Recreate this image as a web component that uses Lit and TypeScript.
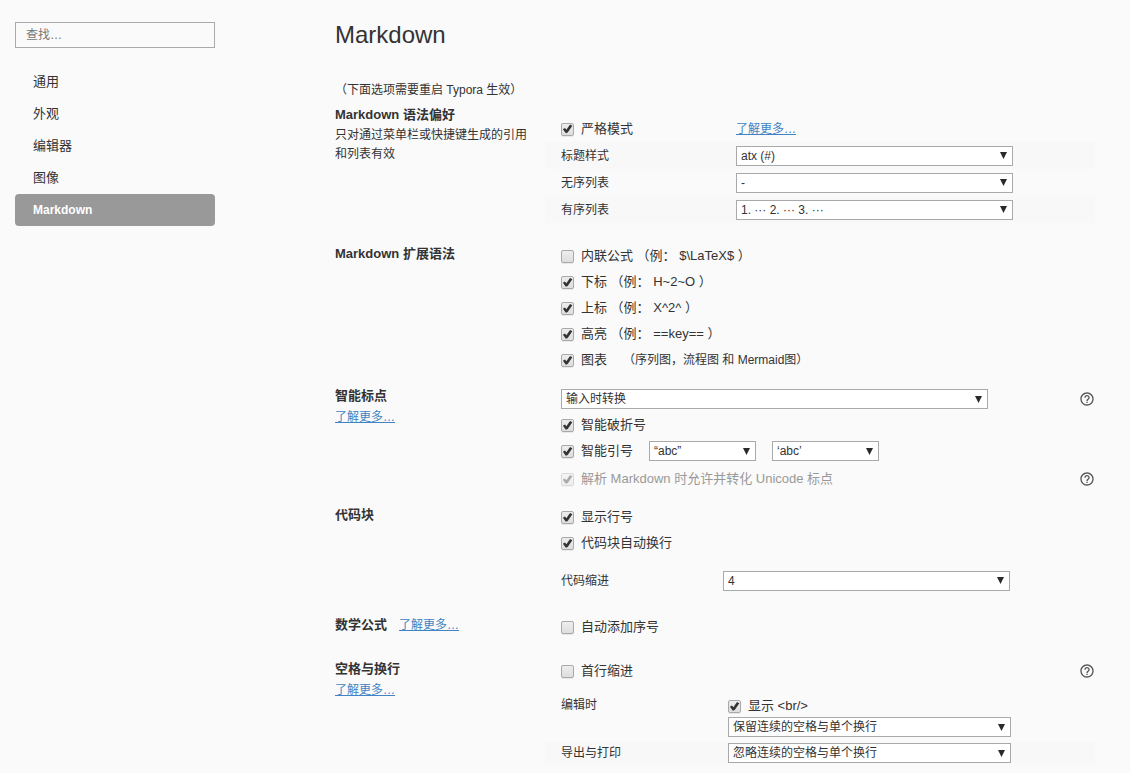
import { LitElement, html, css, nothing } from "lit";
import { customElement, property } from "lit/decorators.js";

const base = css`
  :host {
    display: block;
    box-sizing: border-box;
    font-family: "Liberation Sans", "Noto Sans CJK SC", sans-serif;
    color: #333;
  }
  *,
  *::before {
    box-sizing: border-box;
  }
`;

@customElement("check-item")
class CheckItem extends LitElement {
  @property() label = "";
  @property() note = "";
  @property({ type: Boolean }) checked = false;
  @property({ type: Boolean }) disabled = false;

  static styles = [
    base,
    css`
      .item {
        display: flex;
        align-items: center;
        height: 26px;
        font-size: 13px;
        line-height: 20px;
        white-space: nowrap;
      }
      .disabled {
        color: #999;
      }
      .box {
        appearance: none;
        flex: none;
        width: 13px;
        height: 13px;
        margin: 1px 7px 0 0;
        border: 1px solid #a9a9a9;
        border-radius: 2px;
        background: linear-gradient(#ededed, #dedede);
        box-shadow: 0 1px 0 #e8e8e8;
      }
      .box:checked::before {
        content: "";
        display: block;
        width: 11px;
        height: 11px;
        background: #333;
        clip-path: polygon(8% 53%, 27% 42%, 40% 56%, 73% 10%, 94% 20%, 52% 82%, 35% 88%);
      }
      .box:disabled {
        opacity: 0.4;
      }
      .note {
        margin-left: 16px;
        font-size: 12px;
      }
    `,
  ];

  render() {
    return html`<label class="item ${this.disabled ? "disabled" : ""}">
      <input class="box" type="checkbox" ?checked=${this.checked} ?disabled=${this.disabled} />
      <span>${this.label}</span>
      ${this.note ? html`<span class="note">${this.note}</span>` : nothing}
    </label>`;
  }
}

@customElement("select-box")
class SelectBox extends LitElement {
  @property() name = "";
  @property() value = "";

  static styles = [
    base,
    css`
      .wrap {
        display: grid;
        align-items: center;
      }
      .select {
        grid-area: 1 / 1;
        appearance: none;
        width: 100%;
        height: 20px;
        margin: 0;
        padding: 0 20px 0 4px;
        border: 1px solid #a9a9a9;
        border-radius: 0;
        background: #fff;
        color: #333;
        font: inherit;
        font-size: 12px;
        line-height: 18px;
      }
      .arrow {
        grid-area: 1 / 1;
        justify-self: end;
        width: 7px;
        height: 7px;
        margin-right: 6px;
        fill: #2a2a2a;
        pointer-events: none;
      }
    `,
  ];

  render() {
    return html`<div class="wrap">
      <select class="select" aria-label=${this.name}>
        <option>${this.value}</option>
      </select>
      <svg class="arrow" viewBox="0 0 7 7" aria-hidden="true"><path d="M0 0H7L3.5 7Z" /></svg>
    </div>`;
  }
}

@customElement("help-button")
class HelpButton extends LitElement {
  static styles = [
    base,
    css`
      .button {
        display: block;
        padding: 0;
        border: 0;
        background: none;
      }
      .icon {
        display: block;
        width: 16px;
        height: 16px;
        fill: #555;
      }
    `,
  ];

  render() {
    return html`<button class="button" type="button" aria-label="帮助">
      <svg class="icon" viewBox="0 0 24 24" aria-hidden="true">
        <path
          d="M11 18h2v-2h-2v2zm1-16C6.48 2 2 6.48 2 12s4.48 10 10 10 10-4.48 10-10S17.52 2 12 2zm0 18c-4.41 0-8-3.59-8-8s3.59-8 8-8 8 3.59 8 8-3.59 8-8 8zm0-14c-2.21 0-4 1.79-4 4h2c0-1.1.9-2 2-2s2 .9 2 2c0 2-3 1.75-3 5h2c0-2.25 3-2.5 3-5 0-2.21-1.79-4-4-4z"
        />
      </svg>
    </button>`;
  }
}

@customElement("app-root")
class AppRoot extends LitElement {
  static styles = [
    base,
    css`
      :host {
        min-height: 100vh;
        background: #fafafa;
      }
      .page {
        display: grid;
        grid-template-columns: 200px minmax(0, 1fr);
        gap: 120px;
        padding: 22px 35px 0 15px;
      }
      .search {
        display: block;
        width: 100%;
        height: 26px;
        padding: 0 10px;
        border: 1px solid #a9a9a9;
        background: #fafafa;
        color: #333;
        font: inherit;
        font-size: 12px;
      }
      .search::placeholder {
        color: #777;
      }
      .nav {
        display: grid;
        margin-top: 18px;
      }
      .nav-item {
        height: 32px;
        padding: 0 18px;
        border: 0;
        border-radius: 4px;
        background: none;
        color: #333;
        font: inherit;
        font-size: 13px;
        line-height: 30px;
        text-align: left;
      }
      .active {
        background: #999;
        color: #fff;
        font-size: 12px;
        font-weight: bold;
      }
      .title {
        margin: 0;
        font-size: 24px;
        font-weight: normal;
        line-height: 26px;
      }
      .hint {
        margin: 32px 0 4px;
        font-size: 12px;
        line-height: 20px;
      }
      .section {
        display: grid;
        grid-template-columns: 210px minmax(0, 1fr);
        margin-bottom: 12px;
      }
      .heading {
        margin: 0;
        font-size: 13px;
        line-height: 22px;
      }
      .inline {
        display: flex;
        gap: 12px;
      }
      .desc {
        margin: 0 16px 0 0;
        font-size: 12px;
        line-height: 19px;
      }
      .link {
        color: #4183c4;
        font-size: 12px;
        line-height: 20px;
      }
      .inline .link {
        line-height: 22px;
      }
      .body {
        padding: 0 16px;
      }
      .lowered {
        padding-top: 11px;
      }
      .spaced {
        padding-bottom: 6px;
      }
      .table {
        margin: 0 -16px;
        padding-bottom: 8px;
      }
      .row {
        display: grid;
        grid-template-columns: 175px 277px;
        align-items: center;
        min-height: 27px;
        padding: 0 16px;
        font-size: 12px;
        line-height: 20px;
      }
      .striped {
        background: #f8f8f8;
      }
      .indent {
        grid-template-columns: 162px 287px;
      }
      .breaks {
        grid-template-columns: 167px 283px;
        min-height: 22px;
      }
      .top {
        align-items: start;
      }
      .gap {
        margin-top: 11px;
      }
      .with-help {
        display: flex;
        align-items: center;
        justify-content: space-between;
        margin-right: -16px;
      }
      .mode {
        width: 427px;
      }
      .convert {
        padding: 4px 0 3px;
      }
      .quotes {
        display: flex;
        align-items: center;
        gap: 16px;
        margin-bottom: 2px;
      }
      .quote {
        width: 107px;
      }
      .editing {
        margin-bottom: 5px;
      }
      .tight {
        margin: -2px 0;
      }
    `,
  ];

  private nav = ["通用", "外观", "编辑器", "图像", "Markdown"];

  private more() {
    return html`<a class="link" href="#more">了解更多…</a>`;
  }

  render() {
    return html`<div class="page">
      <aside>
        <input class="search" type="search" placeholder="查找…" aria-label="查找" />
        <nav class="nav">
          ${this.nav.map(
            (n) => html`<button type="button" class="nav-item ${n === "Markdown" ? "active" : ""}">${n}</button>`
          )}
        </nav>
      </aside>
      <main>
        <h1 class="title">Markdown</h1>
        <p class="hint">（下面选项需要重启 Typora 生效）</p>

        <section class="section">
          <div>
            <h2 class="heading">Markdown 语法偏好</h2>
            <p class="desc">只对通过菜单栏或快捷键生成的引用和列表有效</p>
          </div>
          <div class="body lowered">
            <div class="table">
              <div class="row">
                <check-item label="严格模式" checked></check-item>
                <span>${this.more()}</span>
              </div>
              <div class="row striped">
                <span>标题样式</span>
                <select-box name="标题样式" value="atx (#)"></select-box>
              </div>
              <div class="row">
                <span>无序列表</span>
                <select-box name="无序列表" value="-"></select-box>
              </div>
              <div class="row striped">
                <span>有序列表</span>
                <select-box name="有序列表" value="1. ··· 2. ··· 3. ···"></select-box>
              </div>
            </div>
          </div>
        </section>

        <section class="section">
          <h2 class="heading">Markdown 扩展语法</h2>
          <div class="body">
            <check-item label="内联公式 （例： $\\LaTeX$ ）"></check-item>
            <check-item label="下标 （例： H~2~O ）" checked></check-item>
            <check-item label="上标 （例： X^2^ ）" checked></check-item>
            <check-item label="高亮 （例： ==key== ）" checked></check-item>
            <check-item label="图表" note="（序列图，流程图 和 Mermaid图）" checked></check-item>
          </div>
        </section>

        <section class="section">
          <div>
            <h2 class="heading">智能标点</h2>
            ${this.more()}
          </div>
          <div class="body">
            <div class="with-help convert">
              <select-box class="mode" name="智能标点" value="输入时转换"></select-box>
              <help-button></help-button>
            </div>
            <check-item label="智能破折号" checked></check-item>
            <div class="quotes">
              <check-item label="智能引号" checked></check-item>
              <select-box class="quote" name="双引号" value="“abc”"></select-box>
              <select-box class="quote" name="单引号" value="‘abc’"></select-box>
            </div>
            <div class="with-help">
              <check-item label="解析 Markdown 时允许并转化 Unicode 标点" checked disabled></check-item>
              <help-button></help-button>
            </div>
          </div>
        </section>

        <section class="section">
          <h2 class="heading">代码块</h2>
          <div class="body">
            <check-item label="显示行号" checked></check-item>
            <check-item label="代码块自动换行" checked></check-item>
            <div class="table gap">
              <div class="row indent">
                <span>代码缩进</span>
                <select-box name="代码缩进" value="4"></select-box>
              </div>
            </div>
          </div>
        </section>

        <section class="section spaced">
          <div class="inline">
            <h2 class="heading">数学公式</h2>
            ${this.more()}
          </div>
          <div class="body">
            <check-item label="自动添加序号"></check-item>
          </div>
        </section>

        <section class="section">
          <div>
            <h2 class="heading">空格与换行</h2>
            ${this.more()}
          </div>
          <div class="body">
            <div class="with-help">
              <check-item label="首行缩进"></check-item>
              <help-button></help-button>
            </div>
            <div class="table gap">
              <div class="row breaks top editing">
                <span>编辑时</span>
                <div>
                  <check-item class="tight" label="显示 &lt;br/&gt;" checked></check-item>
                  <select-box name="编辑时" value="保留连续的空格与单个换行"></select-box>
                </div>
              </div>
              <div class="row breaks striped">
                <span>导出与打印</span>
                <select-box name="导出与打印" value="忽略连续的空格与单个换行"></select-box>
              </div>
            </div>
          </div>
        </section>
      </main>
    </div>`;
  }
}
